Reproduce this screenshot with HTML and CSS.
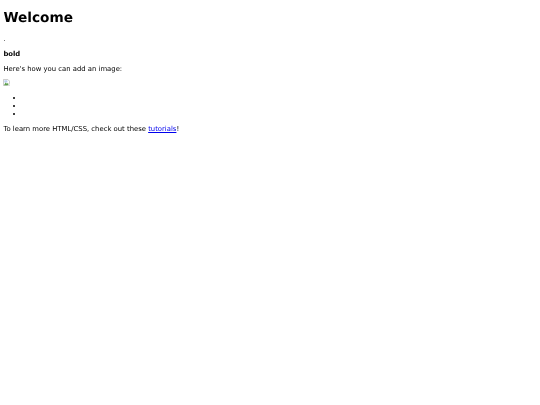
FILE: index.html
```html
<!DOCTYPE html>
<html>
<head>
  <title>Welcome</title>
  <meta charset="UTF-8">
  <link rel="stylesheet" href="styles.css">
</head>
<body>
  <h1>Welcome</h1>
  <p>.</p>
  <p><strong>bold</strong></p>
  <p>Here's how you can add an image:</p>
  <p class="image-row">
    <svg class="broken-image" width="7" height="7" viewBox="0 0 16 16">
      <path d="M1 1H11L15 5V15H1Z" fill="#fff" stroke="#b0b0b0" stroke-width="1.5"/>
      <rect x="3" y="3" width="7" height="5" fill="#b9cdf0"/>
      <path d="M2 14L6 8L9 11L11 9L14 13V14Z" fill="#5fa04e"/>
      <path d="M10 15L15 10V15Z" fill="#fff"/>
    </svg>
  </p>
  <ul>
    <li></li>
    <li></li>
    <li></li>
  </ul>
  <p>To learn more HTML/CSS, check out these <a href="#">tutorials</a>!</p>
</body>
</html>
```

FILE: styles.css
```css
body {
  font-family: "DejaVu Sans", sans-serif;
  font-size: 6.85px;
  line-height: 8px;
  margin: 3.4px;
  color: #000;
  background-color: #fff;
  text-rendering: geometricPrecision;
  filter: blur(0.3px);
}

h1 {
  font-size: 13.7px;
  line-height: 16px;
  margin: 6.5px 0 9.5px;
}

.image-row {
  margin: 6px 0 8px;
}

.broken-image {
  display: block;
  margin-top: -1px;
}

ul {
  margin: 8px 0 5px;
  padding-left: 21px;
}

li {
  height: 8px;
}

a {
  color: #00e;
}
```
